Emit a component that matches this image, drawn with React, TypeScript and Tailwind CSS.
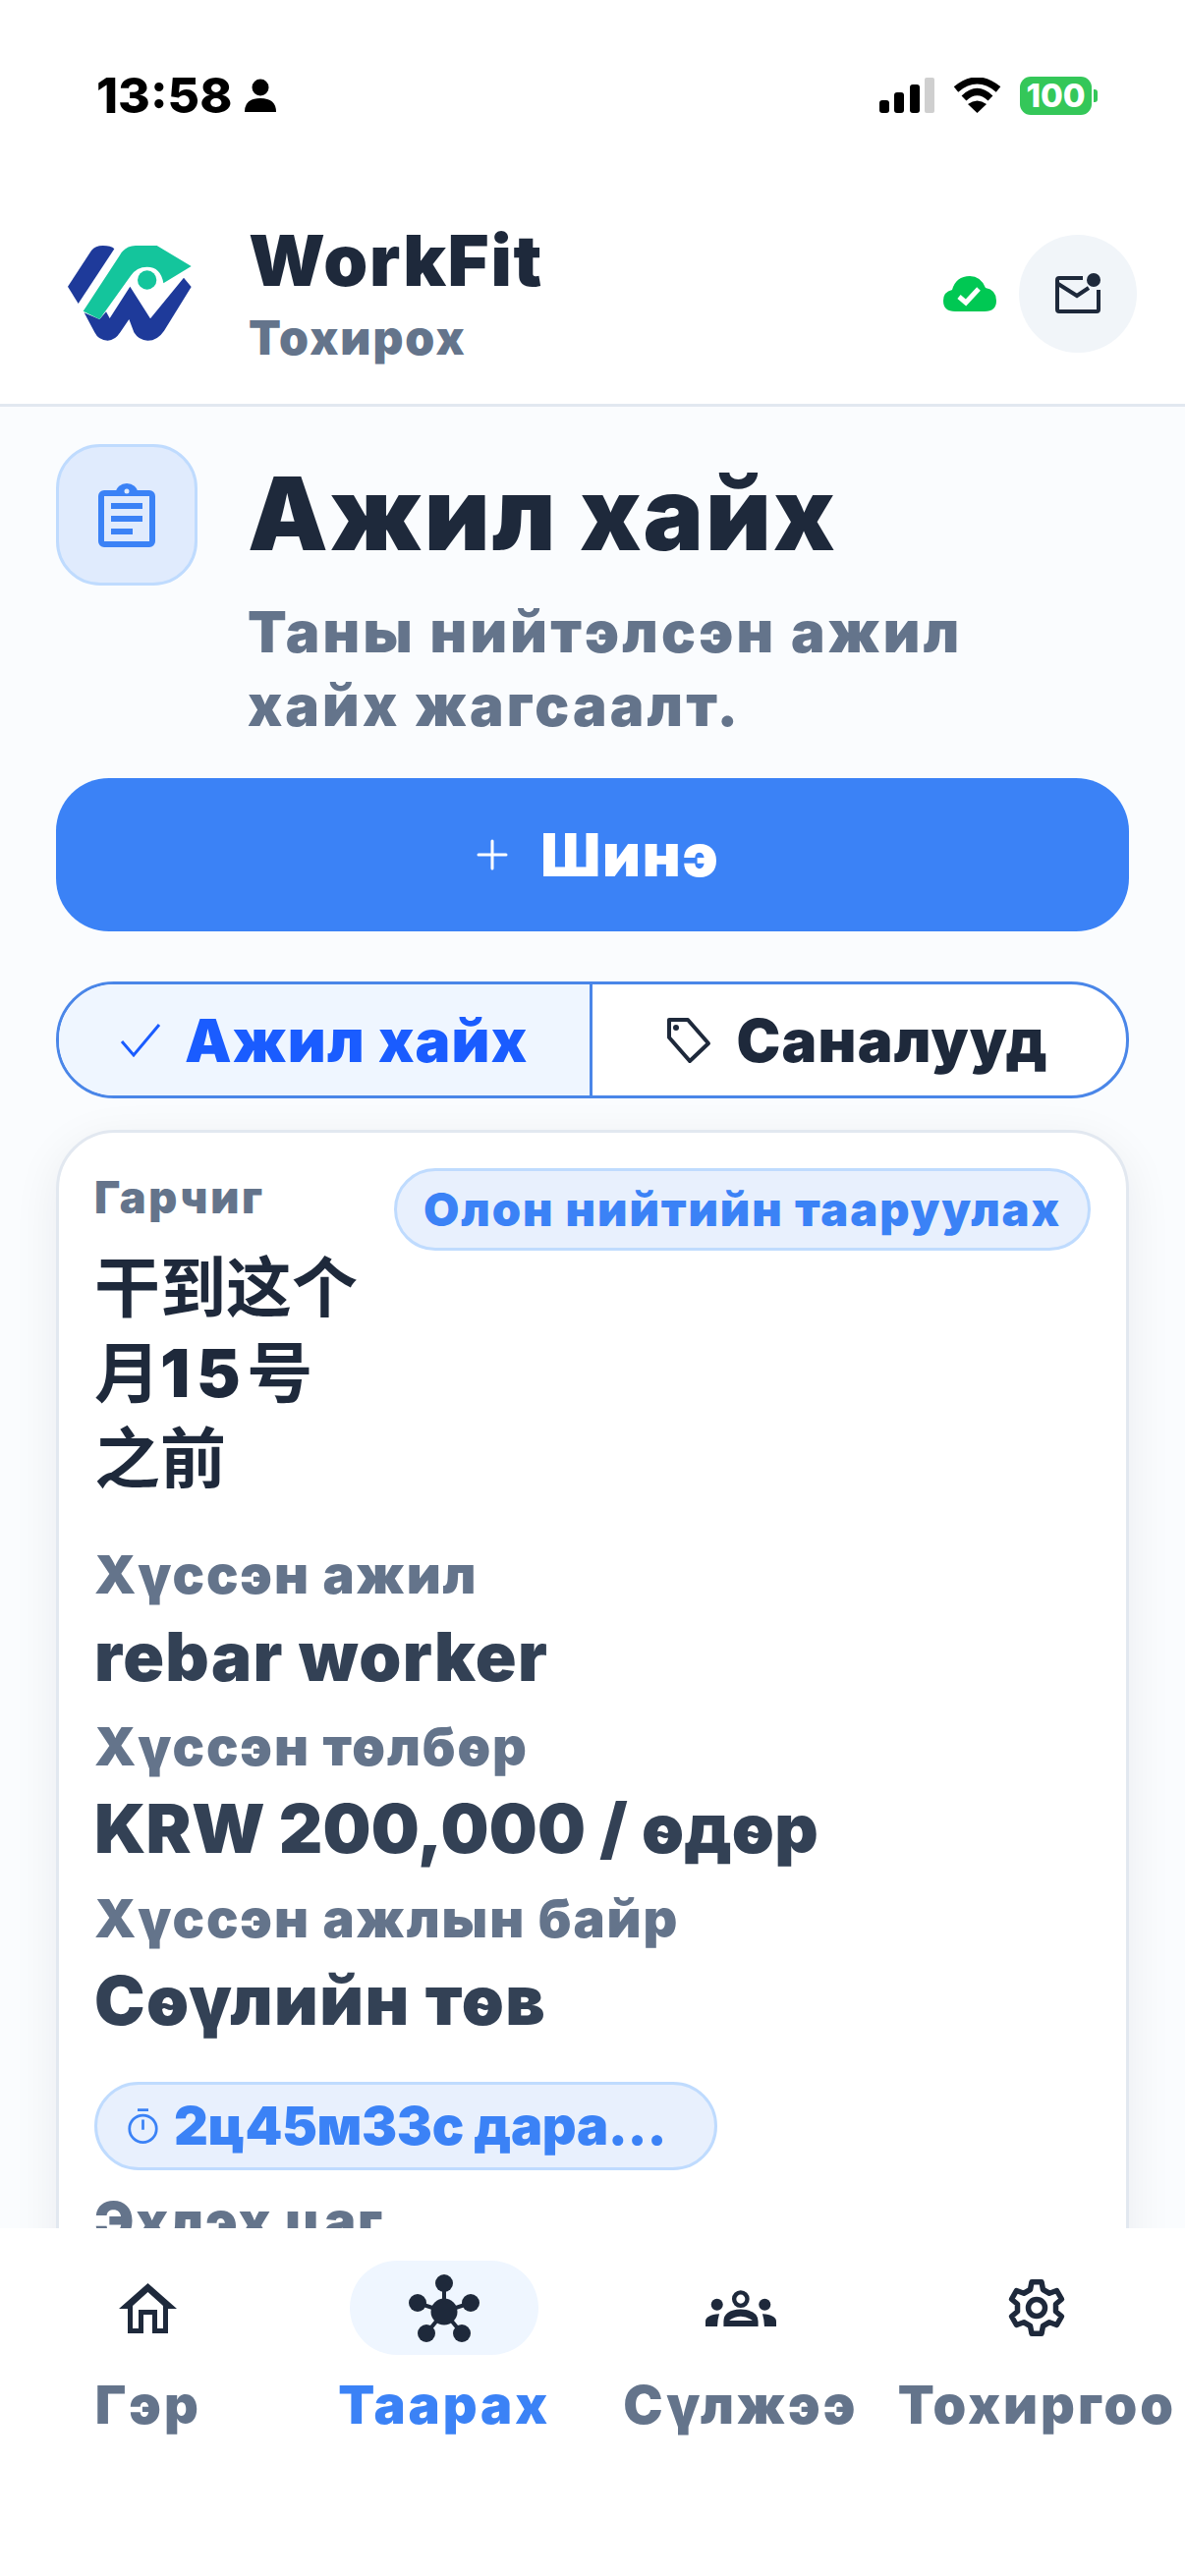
import React from "react";

function Logo() {
  return (
    <svg width="126" height="97" viewBox="88 120 378 291">
      <path d="M88 245 L160 135 Q172 120 195 120 Q220 120 230 130 L120 297 Z" fill="#1e3a9a" />
      <path d="M138 325 L185 345 L205 322 L216 342 L278 245 L340 343 L442 218 L465 246 L382 380 Q362 410 332 410 Q305 410 290 385 L275 345 L248 385 Q232 410 210 410 Q182 410 170 385 Z" fill="#1e3a9a" />
      <path d="M135 320 L245 152 Q262 120 295 120 H360 L465 183 L380 235 Q372 185 330 185 Q298 185 280 212 L185 345 Z" fill="#14c59c" />
      <circle cx="330" cy="225" r="29" fill="#14c59c" />
    </svg>
  );
}

function Field({ label, value, tight }: { label: string; value: string; tight?: boolean }) {
  return (
    <div className="flex flex-col">
      <div className="text-[54px] leading-[72px] font-black tracking-[0.035em] text-[#64748b]">{label}</div>
      <div className={`mt-[2px] text-[69px] leading-[90px] font-black text-[#334155] ${tight ? "tracking-[0.003em]" : "tracking-[0.02em]"}`}>{value}</div>
    </div>
  );
}

function NavItem({ label, active, children }: { label: string; active?: boolean; children: React.ReactNode }) {
  return (
    <div className="flex-1 flex flex-col items-center">
      <div className={`w-[192px] h-[96px] rounded-[48px] flex items-center justify-center ${active ? "bg-[#eff6ff]" : ""}`}>
        {children}
      </div>
      <div className={`mt-[15px] text-[54px] leading-[72px] font-black tracking-[0.055em] whitespace-nowrap ${active ? "text-[#3b82f6]" : "text-[#64748b]"}`}>{label}</div>
    </div>
  );
}

export default function App() {
  return (
    <div className="w-[1206px] h-[2622px] overflow-hidden flex flex-col bg-[#fafcfe] font-['Inter','Noto_Sans_CJK_SC',sans-serif]">
      {/* status bar */}
      <div className="h-[196px] bg-white flex items-start justify-between pt-[70px] pl-[98px] pr-[89px] shrink-0">
        <div className="flex items-center gap-[12px] h-[54px]">
          <span className="text-[50px] leading-[54px] font-extrabold text-black">13:58</span>
          <svg width="34" height="34" viewBox="0 0 34 34"><circle cx="17" cy="9" r="8.5" fill="#000" /><path d="M1 34 Q1 20 17 20 Q33 20 33 34 Z" fill="#000" /></svg>
        </div>
        <div className="flex items-center gap-[19px] h-[54px]">
          <svg width="56" height="36" viewBox="0 0 56 36">
            <rect x="0" y="23" width="10" height="13" rx="3" fill="#000" />
            <rect x="15" y="15" width="10" height="21" rx="3" fill="#000" />
            <rect x="31" y="7" width="10" height="29" rx="3" fill="#000" />
            <rect x="46" y="0" width="10" height="36" rx="2" fill="#cfcfcf" />
          </svg>
          <svg width="49" height="36" viewBox="0 0 49 36" fill="none" stroke="#000" strokeWidth="7">
            <path d="M3 12 Q24.5 -6 46 12" />
            <path d="M11 21 Q24.5 8 38 21" />
            <path d="M15 27 L24.5 36 L34 27 Q24.5 20 15 27 Z" fill="#000" stroke="none" />
          </svg>
          <div className="flex items-center">
            <div className="w-[73px] h-[39px] rounded-[11px] bg-[#34c759] text-white text-[33px] leading-[39px] font-extrabold text-center">100</div>
            <div className="w-[4px] h-[13px] ml-[2px] rounded-r-[3px] bg-[#34c759]" />
          </div>
        </div>
      </div>

      {/* header */}
      <div className="h-[218px] shrink-0 bg-white border-b-[3px] border-[#e2e8f0] flex items-center pl-[69px] pr-[49px] pb-[10px]">
        <Logo />
        <div className="ml-[58px] flex flex-col">
          <div className="text-[72px] leading-[84px] font-black tracking-[0.025em] text-[#1e293b]">WorkFit</div>
          <div className="mt-[7px] text-[48px] leading-[60px] font-black tracking-[0.04em] text-[#64748b]">Тохирох</div>
        </div>
        <div className="ml-auto flex items-center gap-[23px]">
          <svg width="54" height="36" viewBox="0 0 54 36">
            <path d="M12 36 Q0 36 0 25 Q0 16 9 14 Q13 0 27 0 Q38 0 43 12 Q54 14 54 25 Q54 36 42 36 Z" fill="#00c853" />
            <path d="M16 21 L23 27 L36 13" fill="none" stroke="#fff" strokeWidth="5" />
          </svg>
          <div className="w-[120px] h-[120px] rounded-full bg-[#f1f5f9] flex items-center justify-center">
            <svg width="46" height="41" viewBox="0 0 46 41" fill="none">
              <path d="M28 5 H4 Q2 5 2 7 V37 Q2 39 4 39 H42 Q44 39 44 37 V17" stroke="#1e293b" strokeWidth="4" />
              <path d="M3 11 L22 23 L34 15" stroke="#1e293b" strokeWidth="4" />
              <circle cx="39" cy="7" r="7" fill="#1e293b" />
            </svg>
          </div>
        </div>
      </div>

      {/* scrolling content */}
      <div className="flex-1 min-h-0 overflow-hidden px-[57px] pt-[38px]">
        <div className="flex items-start gap-[51px]">
          <div className="w-[144px] h-[144px] shrink-0 rounded-[45px] bg-[#e0ebfd] border-[3px] border-[#bfdbfe] flex items-center justify-center">
            <svg width="58" height="65" viewBox="0 0 58 65" fill="none">
              <rect x="3" y="10" width="52" height="52" rx="3" stroke="#3b82f6" strokeWidth="6" />
              <path d="M18 9 A11 9 0 0 1 40 9 Z" fill="#3b82f6" />
              <circle cx="29" cy="8" r="2.5" fill="#e0ebfd" />
              <rect x="13" y="20" width="32" height="6" fill="#3b82f6" />
              <rect x="13" y="33" width="32" height="6" fill="#3b82f6" />
              <rect x="13" y="46" width="22" height="6" fill="#3b82f6" />
            </svg>
          </div>
          <div className="flex flex-col pt-[5px]">
            <div className="text-[103px] leading-[132px] font-black tracking-[0.02em] text-[#1e293b] whitespace-nowrap">Ажил хайх</div>
            <div className="mt-[17px] text-[58px] leading-[75px] font-black tracking-[0.055em] text-[#64748b] w-[800px]">Таны нийтэлсэн ажил хайх жагсаалт.</div>
          </div>
        </div>

        <div className="mt-[36px] h-[156px] rounded-[54px] bg-[#3b82f6] flex items-center justify-center gap-[33px] pl-[12px] text-white">
          <svg width="32" height="32" viewBox="0 0 32 32" stroke="#fff" strokeWidth="3" strokeLinecap="round"><path d="M16 2 V30 M2 16 H30" /></svg>
          <span className="text-[60px] leading-[72px] font-black tracking-[0.03em]">Шинэ</span>
        </div>

        <div className="mt-[51px] h-[119px] rounded-[59px] border-[3px] border-[#4a86e8] flex overflow-hidden bg-white">
          <div className="flex-1 bg-[#eff6ff] flex items-center justify-center gap-[24px] border-r-[3px] border-[#4a86e8]">
            <svg width="42" height="36" viewBox="0 0 42 36" fill="none" stroke="#1a5cff" strokeWidth="3"><path d="M2 19 L14 33 L40 2" /></svg>
            <span className="text-[60px] leading-[72px] font-black tracking-[0.02em] text-[#1a5cff]">Ажил хайх</span>
          </div>
          <div className="flex-1 flex items-center justify-center gap-[26px] pr-[4px]">
            <svg width="46" height="48" viewBox="0 0 46 48" fill="none" stroke="#1e293b" strokeWidth="4" strokeLinejoin="round"><path d="M3 3 H22 L43 27 L24 45 L3 21 Z" /><circle cx="10" cy="11" r="3" fill="#1e293b" stroke="none" /></svg>
            <span className="text-[60px] leading-[72px] font-black tracking-[0.02em] text-[#1e293b]">Саналууд</span>
          </div>
        </div>

        <div className="mt-[32px] rounded-[60px] bg-white border-[3px] border-[#e2e8f0] shadow-[0_12px_48px_rgba(15,23,42,0.07)] pt-[36px] px-[36px] h-[1200px]">
          <div className="flex items-start justify-between">
            <div className="w-[280px]">
              <div className="text-[45px] leading-[60px] font-black tracking-[0.06em] text-[#64748b]">Гарчиг</div>
              <div className="mt-[18px] text-[67px] leading-[87px] font-bold text-[#1e293b]">
                <div>干到这个</div>
                <div>月<span className="font-black tracking-[0.1em]">15</span>号</div>
                <div>之前</div>
              </div>
            </div>
            <div className="h-[84px] px-[27px] rounded-[42px] bg-[#e8f0fd] border-[3px] border-[#bfdbfe] flex items-center text-[47px] font-black tracking-[0.04em] text-[#3b82f6] whitespace-nowrap">Олон нийтийн тааруулах</div>
          </div>
          <div className="mt-[39px] flex flex-col gap-[11px]">
            <Field label="Хүссэн ажил" value="rebar worker" />
            <Field label="Хүссэн төлбөр" value="KRW 200,000 / өдөр" tight />
            <Field label="Хүссэн ажлын байр" value="Сөүлийн төв" />
          </div>
          <div className="mt-[38px] w-[634px] h-[90px] rounded-[45px] bg-[#e8f0fd] border-[3px] border-[#bfdbfe] flex items-center px-[30px] gap-[15px]">
            <svg width="33" height="40" viewBox="0 0 36 42" fill="none" stroke="#3b82f6" strokeWidth="3"><circle cx="18" cy="24" r="15" /><path d="M12 3 H24 M18 14 V25" /></svg>
            <span className="text-[54px] leading-[60px] font-black tracking-[-0.006em] text-[#3b82f6] whitespace-nowrap">2ц45м33с дара...</span>
          </div>
          <div className="mt-[19px] text-[54px] leading-[66px] font-black tracking-[0.035em] text-[#64748b]">Эхлэх цаг</div>
        </div>
      </div>

      {/* bottom nav */}
      <div className="h-[354px] shrink-0 bg-white flex pt-[33px] relative">
        <NavItem label="Гэр">
          <svg width="59" height="51" viewBox="0 0 59 51" fill="#1e293b" fillRule="evenodd">
            <path d="M0 26 L29.5 0 L59 26 H50 V51 H34 V32 H25 V51 H9 V26 Z M14 23 V46 H20 V27 H39 V46 H45 V23 L29.5 9 Z" />
          </svg>
        </NavItem>
        <NavItem label="Таарах" active>
          <svg width="72" height="69" viewBox="0 0 72 69" fill="#1e293b" stroke="#1e293b">
            <path d="M36 9 V38 M9 29 L36 38 L63 29 M18 60 L36 38 L54 60" fill="none" strokeWidth="4" />
            <circle cx="36" cy="38" r="13.5" stroke="none" />
            <circle cx="36" cy="9" r="9" stroke="none" />
            <circle cx="9" cy="29" r="9" stroke="none" />
            <circle cx="63" cy="29" r="9" stroke="none" />
            <circle cx="18" cy="60" r="9" stroke="none" />
            <circle cx="54" cy="60" r="9" stroke="none" />
          </svg>
        </NavItem>
        <NavItem label="Сүлжээ">
          <svg width="72" height="37" viewBox="0 0 215 110" fill="#1e293b" fillRule="evenodd">
            <circle cx="107" cy="27" r="20" fill="none" stroke="#1e293b" strokeWidth="13" />
            <circle cx="35" cy="44" r="18" />
            <circle cx="180" cy="44" r="18" />
            <path d="M55 110 V95 Q55 60 107 58 Q160 60 160 95 V110 Z M72 92 H143 Q107 68 72 92 Z" />
            <path d="M0 110 V95 Q0 75 42 72 Q36 90 36 110 Z M215 110 V95 Q215 75 173 72 Q179 90 179 110 Z" />
          </svg>
        </NavItem>
        <NavItem label="Тохиргоо">
          <svg width="60" height="60" viewBox="0 0 24 24" fill="none" stroke="#1e293b" strokeWidth="2.2" strokeLinejoin="round"><path d="M10 1.5 H14 L14.6 4.6 L17.2 6.1 L20.2 5 L22.2 8.5 L19.8 10.5 V13.5 L22.2 15.5 L20.2 19 L17.2 17.9 L14.6 19.4 L14 22.5 H10 L9.4 19.4 L6.8 17.9 L3.8 19 L1.8 15.5 L4.2 13.5 V10.5 L1.8 8.5 L3.8 5 L6.8 6.1 L9.4 4.6 Z" /><circle cx="12" cy="12" r="3.4" /></svg>
        </NavItem>
      </div>
    </div>
  );
}
